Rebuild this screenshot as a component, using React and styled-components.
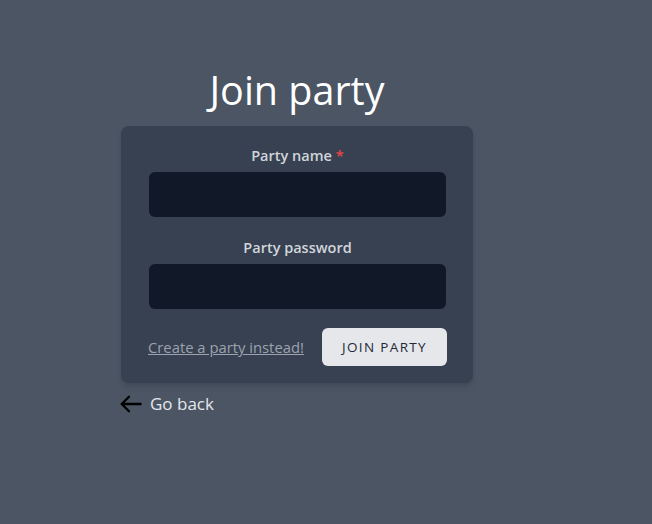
import React from "react";
import styled, { createGlobalStyle } from "styled-components";

const GlobalStyle = createGlobalStyle`
  body {
    margin: 0;
    background: #4b5563;
    font-family: "Open Sans", "Noto Sans", sans-serif;
  }
`;

const Page = styled.main`
  min-height: 100vh;
  box-sizing: border-box;
  padding: 67px 0 0 121px;
  display: flex;
  flex-direction: column;
  align-items: flex-start;
`;

const Title = styled.h1`
  width: 352px;
  margin: 0 0 12px;
  text-align: center;
  font-size: 39.5px;
  line-height: 1.2;
  font-weight: 400;
  color: #ffffff;
`;

const Card = styled.form`
  width: 352px;
  box-sizing: border-box;
  padding: 18px 27px 17px 28px;
  background: #374151;
  border-radius: 8px;
  box-shadow: 0 4px 6px -1px rgba(0, 0, 0, 0.12), 0 2px 4px -2px rgba(0, 0, 0, 0.1);
`;

const Field = styled.div`
  display: flex;
  flex-direction: column;
  align-items: center;
  & + & {
    margin-top: 19px;
  }
`;

const Label = styled.label`
  font-size: 14.5px;
  line-height: 24px;
  font-weight: 600;
  color: #d1d5db;
  margin-bottom: 4px;
`;

const Required = styled.span`
  color: #ef4444;
  margin-left: 4px;
`;

const Input = styled.input`
  width: 100%;
  height: 45px;
  box-sizing: border-box;
  border: none;
  border-radius: 6px;
  background: #111827;
  color: #f3f4f6;
  padding: 0 12px;
  font: inherit;
  outline: none;
`;

const Actions = styled.div`
  display: flex;
  justify-content: space-between;
  align-items: center;
  margin-top: 19px;
`;

const SwitchLink = styled.a`
  margin-left: -1px;
  color: #9ca3af;
  font-size: 14.8px;
  text-decoration: underline;
  cursor: pointer;
`;

const SubmitButton = styled.button`
  height: 38px;
  padding: 0 20px;
  margin-right: -1px;
  border: none;
  border-radius: 6px;
  background: #e5e7eb;
  color: #1f2937;
  font-family: inherit;
  font-size: 13.5px;
  font-weight: 500;
  letter-spacing: 0.1em;
  text-transform: uppercase;
  cursor: pointer;
`;

const BackLink = styled.a`
  margin-top: 9px;
  display: flex;
  align-items: center;
  gap: 7px;
  color: #e5e7eb;
  font-size: 17px;
  line-height: 24px;
  cursor: pointer;
  svg {
    margin-left: -2px;
  }
`;

const ArrowLeft = () => (
  <svg width="24" height="24" viewBox="0 0 24 24" fill="none" stroke="#000" strokeWidth="2.3" strokeLinecap="round" strokeLinejoin="round">
    <path d="M10 19.3 L2.7 12 L10 4.7 M2.7 12 H21.7" />
  </svg>
);

export default function App() {
  return (
    <>
      <GlobalStyle />
      <Page>
        <Title>Join party</Title>
        <Card onSubmit={(e) => e.preventDefault()}>
          <Field>
            <Label htmlFor="party-name">
              Party name<Required>*</Required>
            </Label>
            <Input id="party-name" type="text" />
          </Field>
          <Field>
            <Label htmlFor="party-password">Party password</Label>
            <Input id="party-password" type="password" />
          </Field>
          <Actions>
            <SwitchLink>Create a party instead!</SwitchLink>
            <SubmitButton type="submit">Join party</SubmitButton>
          </Actions>
        </Card>
        <BackLink>
          <ArrowLeft />
          Go back
        </BackLink>
      </Page>
    </>
  );
}
